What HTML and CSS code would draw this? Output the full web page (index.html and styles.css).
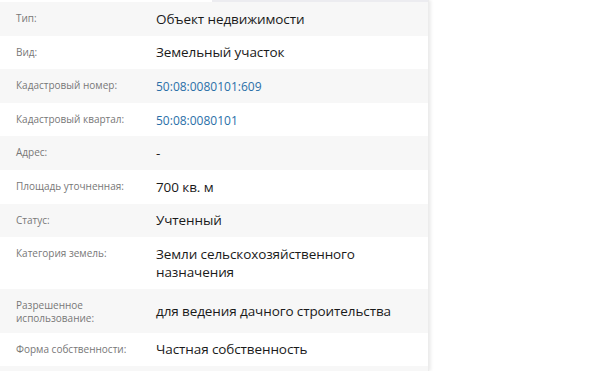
FILE: index.html
```html
<!DOCTYPE html>
<html lang="ru">
<head>
<meta charset="utf-8">
<title>Объект недвижимости</title>
<link rel="stylesheet" href="styles.css">
</head>
<body>
<div class="panel">
  <div class="topline"><span class="topline-left"></span><span class="topline-right"></span></div>
  <dl class="props">
    <div class="row"><dt>Тип:</dt><dd>Объект недвижимости</dd></div>
    <div class="row"><dt>Вид:</dt><dd>Земельный участок</dd></div>
    <div class="row"><dt>Кадастровый номер:</dt><dd><a class="link" href="#">50:08:0080101:609</a></dd></div>
    <div class="row"><dt>Кадастровый квартал:</dt><dd><a class="link" href="#">50:08:0080101</a></dd></div>
    <div class="row"><dt>Адрес:</dt><dd class="muted">-</dd></div>
    <div class="row"><dt>Площадь уточненная:</dt><dd>700 кв. м</dd></div>
    <div class="row"><dt>Статус:</dt><dd>Учтенный</dd></div>
    <div class="row"><dt>Категория земель:</dt><dd class="top">Земли сельскохозяйственного назначения</dd></div>
    <div class="row"><dt>Разрешенное использование:</dt><dd>для ведения дачного строительства</dd></div>
    <div class="row"><dt>Форма собственности:</dt><dd>Частная собственность</dd></div>
    <div class="row"><dt>&nbsp;</dt><dd>&nbsp;</dd></div>
  </dl>
</div>
</body>
</html>
```
FILE: styles.css
```css
html, body {
  margin: 0;
  padding: 0;
  background: #ffffff;
  overflow: hidden;
}
body {
  font-family: "Open Sans", "Noto Sans", sans-serif;
  color: #1a1a1a;
}
.panel {
  width: 428px;
  height: 371px;
  overflow: hidden;
  background: #ffffff;
  box-shadow: 2px 0 3px rgba(0, 0, 0, 0.08);
  border-right: 1px solid #ececec;
}
.topline {
  display: flex;
  height: 2px;
}
.topline-left {
  width: 212px;
  background: #ffffff;
}
.topline-right {
  flex: 1;
  background: #ececf0;
}
.props {
  margin: 0;
}
.row {
  display: grid;
  grid-template-columns: 140px 1fr;
  padding: 7.8px 16px;
}
.row:nth-child(odd) {
  background: #f7f7f7;
}
.row dt {
  margin: 0;
  padding: 2.2px 0 0 0;
  font-size: 10px;
  line-height: 13px;
  color: #777777;
  align-self: start;
  width: 126px;
}
.row dd {
  margin: 0;
  font-size: 13.5px;
  letter-spacing: -0.1px;
  line-height: 18px;
  color: #1a1a1a;
  align-self: center;
}
.row dd.top {
  align-self: start;
}
.link {
  font-size: 12px;
  letter-spacing: 0;
  line-height: 1;
  color: #2a6fa8;
  text-decoration: none;
}
.muted {
  color: #777777;
}
```
